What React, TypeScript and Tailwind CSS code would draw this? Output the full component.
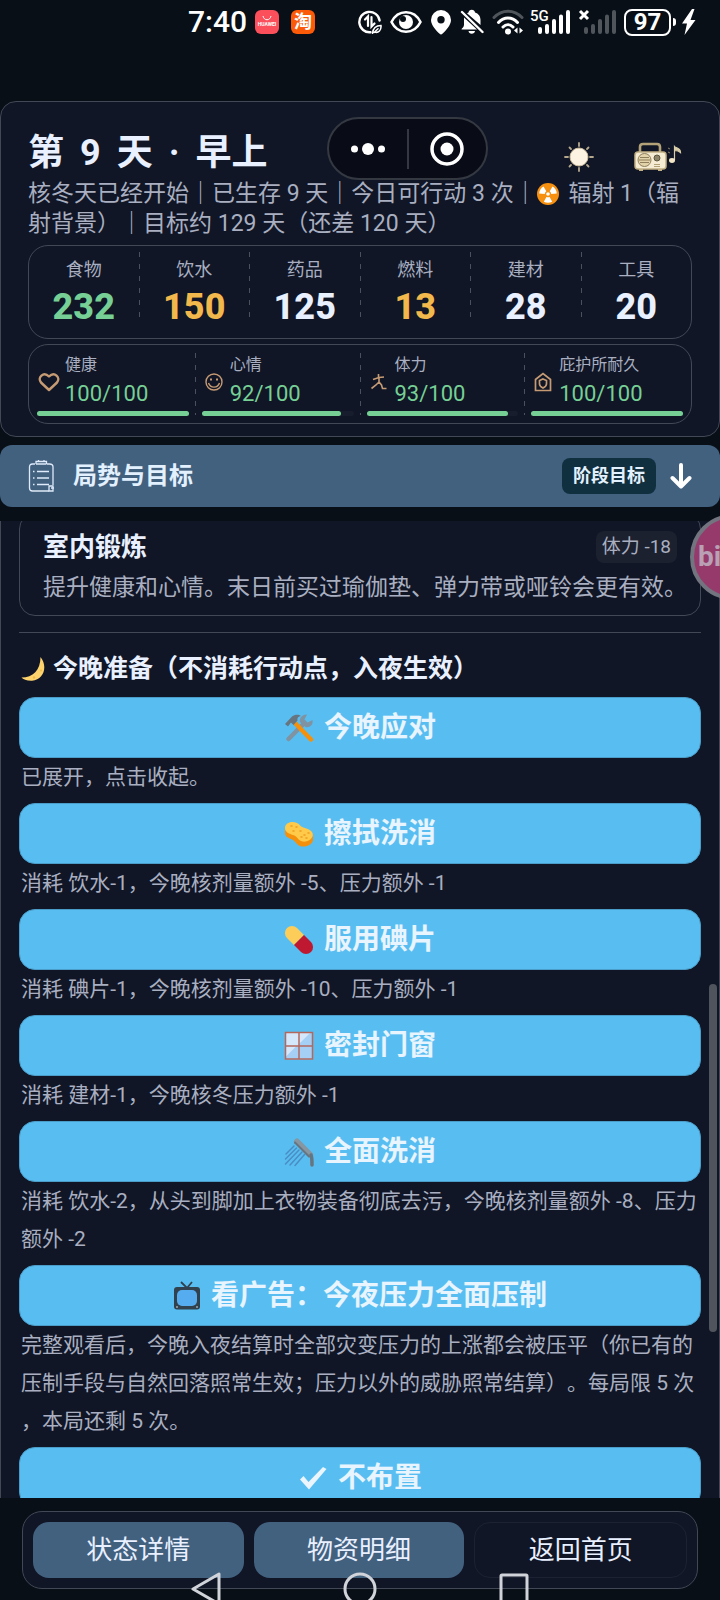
import React from 'react';
import clsx from 'clsx';

interface Resource {
  label: string;
  value: number;
  color: string;
}

interface Stat {
  label: string;
  value: number;
  icon: React.ReactNode;
}

interface NightAction {
  label: string;
  icon: React.ReactNode;
  lines: string[];
}

/* ---------- status bar icons ---------- */

const DataSaverIcon = () => (
  <svg width="24" height="24" viewBox="0 0 24 24" fill="none" stroke="white" strokeWidth="2.4" strokeLinecap="round">
    <path d="M21.6 10.5A10.2 10.2 0 1 0 12.5 22.2" />
    <path d="M7 9.5 10 6.5V16M13.5 7V16.5L16.5 13.5" strokeWidth="2.2" />
    <path d="M14.5 23.5C15 18 18 15.5 23 15.5 23.5 20 20.5 23.5 16.5 22M16 22.5 20 18.8" strokeWidth="1.5" />
  </svg>
);

const EyeIcon = () => (
  <svg width="32" height="24" viewBox="0 0 32 24">
    <path d="M1.5 12C8-1 24-1 30.500 12 24 25 8 25 1.500 12Z" fill="none" stroke="white" strokeWidth="2.6" strokeLinejoin="round" />
    <circle cx="16" cy="12" r="7" fill="white" />
    <circle cx="13" cy="9" r="3" fill="#080f16" />
  </svg>
);

const PinIcon = () => (
  <svg width="22" height="26" viewBox="0 0 22 26">
    <path d="M11 1a10 10 0 0 0-10 10c0 5 5 10.500 8.600 13.700a2 2 0 0 0 2.800 0C16 21.500 21 16 21 11A10 10 0 0 0 11 1Zm0 13.500a3.700 3.700 0 1 1 0-7.400 3.700 3.700 0 0 1 0 7.400Z" fill="white" fillRule="evenodd" />
  </svg>
);

const BellOffIcon = () => (
  <svg width="24" height="26" viewBox="0 0 24 26">
    <path d="M8.500 3.500a3.300 3.300 0 0 1 6.500 0c3.500 1 5.500 4 5.500 7.500v5L7 4.200ZM4 8.500 17 20.500H1.500c0-1.500 2.500-2 2.500-4.500ZM8.500 22h6.500a3.300 3.300 0 0 1-6.500 0Z" fill="white" />
    <path d="M2 3 22.500 23" stroke="white" strokeWidth="2.400" strokeLinecap="round" />
  </svg>
);

const WifiIcon = () => (
  <svg width="32" height="26" viewBox="0 0 32 26" fill="none" strokeLinecap="round" strokeWidth="3">
    <path d="M2 8.500C10 0 22 0 30 8.500" stroke="#50555c" />
    <path d="M6.500 13.500C12 7.500 20 7.500 25.500 13.500M11 18C14 15 18 15 21 18" stroke="white" />
    <circle cx="16" cy="22.500" r="3" fill="white" />
    <path d="M25.500 18.500v6l-3.500-3ZM27.500 18.500v6l3.500-3Z" fill="white" />
  </svg>
);

const SignalBars = ({ color }: { color: string }) => (
  <svg width="38" height="26" viewBox="0 0 38 26" stroke={color} strokeWidth="4" strokeLinecap="round">
    <path d="M8 20v3M15 17v6M22 12v11M29 7.500V23M36 3V23" />
  </svg>
);

const BoltIcon = () => (
  <svg width="15" height="28" viewBox="0 0 15 28">
    <path d="M11 1 1 15.500h5L3.500 27 14.500 12H9.500L13.500 1Z" fill="white" />
  </svg>
);

const StatusBar: React.FC = () => (
  <div className="flex h-11 shrink-0 items-center justify-end pr-6">
    <span className="text-[30px] leading-none font-medium text-white">7:40</span>
    <span className="ml-2 flex size-6 flex-col items-center justify-center rounded-md bg-[#fb4f5c]">
      <svg width="10" height="5" viewBox="0 0 10 5" fill="none" stroke="white">
        <path d="M1 0c1 5 7 5 8 0" />
      </svg>
      <span className="text-[5px] leading-[7px] font-bold text-white">HUAWEI</span>
    </span>
    <span className="ml-3 flex size-6 items-center justify-center rounded-md bg-[#fb5a08] text-[18px] leading-none font-bold text-white">淘</span>
    <div className="ml-[43px] flex items-center gap-2">
      <DataSaverIcon />
      <EyeIcon />
      <PinIcon />
      <BellOffIcon />
      <WifiIcon />
      <span className="relative">
        <SignalBars color="white" />
        <span className="absolute top-0 -left-0.5 text-[15px] leading-none font-medium text-white">5G</span>
      </span>
      <span className="relative">
        <SignalBars color="#50555c" />
        <svg className="absolute top-0 left-0" width="12" height="12" viewBox="0 0 12 12">
          <path d="M2 2 10 10M10 2 2 10" stroke="white" strokeWidth="3" />
        </svg>
      </span>
      <span className="flex items-center gap-px">
        <span className="flex h-[27px] w-[47px] items-center justify-center rounded-lg border-2 border-white text-[24px] leading-none font-bold text-white">97</span>
        <span className="ml-px h-2 w-[3px] rounded-r-sm bg-white" />
        <span className="ml-1"><BoltIcon /></span>
      </span>
    </div>
  </div>
);

/* ---------- header icons ---------- */

const SunIcon = () => (
  <svg width="30" height="30" viewBox="0 0 30 30">
    <circle cx="15" cy="15" r="9" fill="#fdf3e3" stroke="#cdbd9c" />
    <path d="M15 1v3M15 26V29M1 15h3M26 15H29M5.500 5.500l1.500 1.500M23 23l1.500 1.500M5.500 24.500l1.500-1.500M23 7l1.500-1.500" stroke="#b5a88d" strokeWidth="1.800" strokeLinecap="round" />
  </svg>
);

const RadioIcon = () => (
  <svg width="48" height="30" viewBox="0 0 48 30">
    <path d="M6 11V5q0-3 3-3h14q3 0 3 3v6" fill="none" stroke="#b3a277" strokeWidth="2.600" />
    <rect x="1" y="10" width="31" height="17" rx="3" fill="#f6ecd4" stroke="#c2b084" strokeWidth="1.500" />
    <path d="M5 28h4M24 28h4" stroke="#c2b084" strokeWidth="2" />
    <circle cx="10.500" cy="18" r="6.500" fill="#e2d3ab" stroke="#8f7f5a" />
    <path d="M6 15.500h9M5 18h11M6 20.500h9" stroke="#8f7f5a" />
    <circle cx="23" cy="16" r="3" fill="#8e8467" stroke="#5d563f" />
    <path d="M20 22.500h6M20 24.500h6" stroke="#b3a277" />
    <path d="M40.500 18V4.500c1.500 2 6 1 6 6-2-2-4-2-6-2" fill="#d9cda8" stroke="#d9cda8" strokeWidth="1.200" />
    <ellipse cx="38" cy="18.500" rx="3" ry="2.400" fill="#f1e5c6" />
    <path d="M34 6l2 1M34 10l2 1" stroke="#8b8269" />
  </svg>
);

const RadiationIcon = () => (
  <svg className="mr-1 inline-block align-[-4px]" width="22" height="22" viewBox="0 0 22 22">
    <circle cx="11" cy="11" r="11" fill="#f59011" />
    <circle cx="11" cy="11" r="1.800" fill="white" />
    <path d="M9.300 8.300 6.500 3.500A8.800 8.800 0 0 0 2.200 10.500L7.800 11a3.300 3.300 0 0 1 1.500-2.700ZM12.700 8.300l2.800-4.800a8.800 8.800 0 0 1 4.300 7L14.200 11a3.300 3.300 0 0 0-1.500-2.700ZM9.400 13.900 6.800 18.700a8.800 8.800 0 0 0 8.400 0L12.600 13.900a3.300 3.300 0 0 1-3.200 0Z" fill="white" />
  </svg>
);

const HeartIcon = () => (
  <svg width="22" height="20" viewBox="0 0 22 20" fill="none" stroke="#c69b74" strokeWidth="2.400">
    <path d="M11 18 3 10.500C-1 5.500 5.500-1 11 4.500 16.500-1 23 5.500 19 10.500Z" strokeLinejoin="round" />
  </svg>
);

const SmileIcon = () => (
  <svg width="18" height="18" viewBox="0 0 18 18" fill="none" stroke="#c69b74" strokeWidth="1.400">
    <circle cx="9" cy="9" r="8" />
    <path d="M3.500 10c2 5.500 9 5.500 11 0" />
    <path d="M5 6.500h2M11 6.500h2" strokeWidth="2" />
  </svg>
);

const RunnerIcon = () => (
  <svg width="16" height="16" viewBox="0 0 16 16" fill="none" stroke="#c69b74" strokeWidth="1.600">
    <path d="M7.500 0v3M2 5.500 8 3.500l5-.5M8 3.500 8 8 5 11 .5 14.500M8 8l2.500 3 1 3.500h4" />
  </svg>
);

const ShelterIcon = () => (
  <svg width="18" height="20" viewBox="0 0 18 20" fill="none" stroke="#c69b74" strokeWidth="1.700">
    <path d="M1.500 18.500V7.500L9 1.500l7.500 6v11Z" />
    <path d="M9 7 12.500 8.500v3.500c0 1.500-1.500 3-3.500 4-2-1-3.500-2.500-3.500-4V8.500Z" />
  </svg>
);

const ClipboardIcon = () => (
  <svg width="27" height="34" viewBox="0 0 27 34" fill="none" stroke="#dfeafa" strokeWidth="1.300">
    <path d="M7 5H4.500Q1.500 5 1.500 8v21q0 3 3 3H21M19 5h2.500Q25 5 25 8v18" />
    <path d="M8 5V2.500h2.500V1M18.500 5V2.500H16V1M10.500 2.500H16M8 5h10.500" />
    <path d="M5 12.500h1.500M5 19h1.500M5 25.500h1.500M9 12.500h12M9 19h12M9 25.500h12" />
    <path d="M21 27h4v5h-4zM23 29h3" />
  </svg>
);

const ArrowDownIcon = () => (
  <svg width="22" height="28" viewBox="0 0 22 28" fill="none" stroke="white" strokeWidth="4" strokeLinecap="round" strokeLinejoin="round">
    <path d="M11 3v21M2.500 16 11 24.500 19.500 16" />
  </svg>
);

/* ---------- night action icons ---------- */

const MoonIcon = () => (
  <svg width="24" height="24" viewBox="0 0 24 24">
    <path d="M19.500 0C27 9 23 23 11 23.800 6 24 2 22.500 .5 20.500 12 20.500 19.500 13 19.500 0Z" fill="#fdd36d" />
    <circle cx="13" cy="20.500" r="1.200" fill="#f0b94b" />
    <circle cx="20" cy="13.500" r="1" fill="#f0b94b" />
  </svg>
);

const ToolsIcon = () => (
  <svg width="30" height="30" viewBox="0 0 30 30">
    <path d="M4.500 26 20.500 10" stroke="#7f93a3" strokeWidth="4.500" strokeLinecap="round" />
    <path d="M23 1.500 20.500 6.500 23.500 9.500 28.500 7c1 5-3 8-7 7L16 9c-1-4 2.500-8 7-7.500Z" fill="#7f93a3" />
    <path d="M11 10 27 26.500" stroke="#f4900c" strokeWidth="4.500" strokeLinecap="round" />
    <path d="M1 11 8 3.500c3-2.500 7-2 9-.5-3 .5-4 2-3.500 4.500L9.500 12 7 9.500 4 13.500Z" fill="#66757f" />
  </svg>
);

const SpongeIcon = () => (
  <svg width="30" height="30" viewBox="0 0 30 30">
    <path d="M1 9v5c0 4 4 5 7 6.500 4 2 5 6.500 10 7 6 .5 11-3 11-7v-5Z" fill="#f4900c" />
    <path d="M1 9C1 3.500 8 1.500 13 4c4 2 3 4 8 5 6 1.500 9 5 7.500 8.500C27 21.500 21 24 17 22c-4-2-3.500-4.500-8-6C4.500 14.500 1 13 1 9Z" fill="#ffc94a" />
    <path d="M7 7h1M12 8h1M9 12h1M16 12h1M20 16h1M24 14h1M17 18h1M22 19h1" stroke="#ee9d20" strokeWidth="1.500" strokeLinecap="round" />
  </svg>
);

const PillIcon = () => (
  <svg width="30" height="30" viewBox="0 0 30 30">
    <path d="M10 20 3 13A7 7 0 0 1 13 3L20 10Z" fill="#fcce59" />
    <path d="M20 10 27 17A7 7 0 0 1 17 27L10 20Z" fill="#be1931" />
  </svg>
);

const WindowIcon = () => (
  <svg width="30" height="30" viewBox="0 0 30 30">
    <rect x="1.500" y="1.500" width="27" height="27" fill="#a5cff5" />
    <path d="M1.500 1.500h13.500v13.500H1.500ZM15 15V13L26.500 1.500H15ZM1.500 28.500V26L12.500 15H1.500Z" fill="#d5e7fa" />
    <path d="M1.500 1.500h27v26.500h-27ZM15 1.500v27M1.500 15h27" fill="none" stroke="#b4685c" strokeWidth="1.500" />
  </svg>
);

const ShowerIcon = () => (
  <svg width="30" height="30" viewBox="0 0 30 30" fill="none" strokeLinecap="round">
    <path d="M10 9 2 17M12.500 11 1.500 22M15 13 1.500 27M18 15 6 28M20.500 17.500 11 28.500" stroke="#4a8dc4" strokeWidth="1.500" />
    <path d="M13 4.500 26 17.500" stroke="#8796a0" strokeWidth="6" />
    <path d="M11 5.500 25 19.500" stroke="#66757f" strokeWidth="2" />
    <path d="M27 18c1 2 1 6 1 10" stroke="#66757f" strokeWidth="3.500" />
  </svg>
);

const TvIcon = () => (
  <svg width="28" height="30" viewBox="0 0 28 30">
    <path d="M8 1l6 6 5-6" fill="none" stroke="#31414d" strokeWidth="1.800" />
    <rect x="1" y="6" width="26" height="22.500" rx="3" fill="#31414d" />
    <rect x="4" y="9" width="20" height="16" rx="5" fill="#55acee" />
    <circle cx="4" cy="26" r="1" fill="#9aaab4" />
    <circle cx="24" cy="26" r="1" fill="#9aaab4" />
  </svg>
);

const CheckIcon = () => (
  <svg width="30" height="28" viewBox="0 0 30 28">
    <path d="M2 15.500 5.500 12l5 6L25 3l3.500 2L11 25.500Z" fill="#eaf5fe" />
  </svg>
);

/* ---------- data ---------- */

const resources: Resource[] = [
  { label: '食物', value: 232, color: 'text-[#76d095]' },
  { label: '饮水', value: 150, color: 'text-[#f2b84b]' },
  { label: '药品', value: 125, color: 'text-[#e9f0ff]' },
  { label: '燃料', value: 13, color: 'text-[#f2b84b]' },
  { label: '建材', value: 28, color: 'text-[#e9f0ff]' },
  { label: '工具', value: 20, color: 'text-[#e9f0ff]' },
];

const stats: Stat[] = [
  { label: '健康', value: 100, icon: <HeartIcon /> },
  { label: '心情', value: 92, icon: <SmileIcon /> },
  { label: '体力', value: 93, icon: <RunnerIcon /> },
  { label: '庇护所耐久', value: 100, icon: <ShelterIcon /> },
];

const nightActions: NightAction[] = [
  { label: '今晚应对', icon: <ToolsIcon />, lines: ['已展开，点击收起。'] },
  { label: '擦拭洗消', icon: <SpongeIcon />, lines: ['消耗 饮水-1，今晚核剂量额外 -5、压力额外 -1'] },
  { label: '服用碘片', icon: <PillIcon />, lines: ['消耗 碘片-1，今晚核剂量额外 -10、压力额外 -1'] },
  { label: '密封门窗', icon: <WindowIcon />, lines: ['消耗 建材-1，今晚核冬压力额外 -1'] },
  {
    label: '全面洗消',
    icon: <ShowerIcon />,
    lines: ['消耗 饮水-2，从头到脚加上衣物装备彻底去污，今晚核剂量额外 -8、压力', '额外 -2'],
  },
  {
    label: '看广告：今夜压力全面压制',
    icon: <TvIcon />,
    lines: [
      '完整观看后，今晚入夜结算时全部灾变压力的上涨都会被压平（你已有的',
      '压制手段与自然回落照常生效；压力以外的威胁照常结算）。每局限 5 次',
      '，本局还剩 5 次。',
    ],
  },
  { label: '不布置', icon: <CheckIcon />, lines: [] },
];

/* ---------- sections ---------- */

const DashedLine = ({ className }: { className?: string }) => (
  <span
    className={clsx(
      'w-px shrink-0 bg-[repeating-linear-gradient(to_bottom,#4b505e_0px,#4b505e_5px,transparent_5px,transparent_12px)]',
      className
    )}
  />
);

const Capsule: React.FC = () => (
  <div className="absolute top-[117px] left-1/2 ml-[-33px] flex h-[63px] w-[161px] items-center rounded-full border-2 border-[#343841] bg-[#090c17]">
    <button aria-label="更多" className="flex flex-1 items-center justify-center">
      <svg width="36" height="14" viewBox="0 0 36 14" fill="white">
        <circle cx="4.500" cy="7" r="3.500" />
        <circle cx="18" cy="7" r="6" />
        <circle cx="31.500" cy="7" r="3.500" />
      </svg>
    </button>
    <span className="h-10 w-0.5 bg-[#343841]" />
    <button aria-label="关闭" className="flex flex-1 items-center justify-center">
      <svg width="34" height="34" viewBox="0 0 34 34">
        <circle cx="17" cy="17" r="15" fill="none" stroke="white" strokeWidth="3.500" />
        <circle cx="17" cy="17" r="6.500" fill="white" />
      </svg>
    </button>
  </div>
);

const Header: React.FC = () => (
  <header className="mt-[57px] shrink-0 rounded-2xl border border-[#434856] bg-[#101626] px-[27px] pt-[27px] pb-3">
    <div className="flex h-[50px] items-center justify-between">
      <h1 className="flex gap-4 pb-0.5 text-[36px] leading-[44px] font-bold text-[#e9f0ff]">
        <span>第</span>
        <span>9</span>
        <span>天</span>
        <span>·</span>
        <span>早上</span>
      </h1>
      <div className="flex items-center gap-10 pt-1.5 pr-2.5">
        <button aria-label="天气"><SunIcon /></button>
        <button aria-label="收音机"><RadioIcon /></button>
      </div>
    </div>
    <p className="text-[23px] leading-[30px] whitespace-nowrap text-[#a9afc0]">
      核冬天已经开始｜已生存 9 天｜今日可行动 3 次｜<RadiationIcon /> 辐射 1（辐
      <br />
      射背景）｜目标约 129 天（还差 120 天）
    </p>

    <div className="mt-1.5 flex h-[94px] rounded-[20px] border border-[#434856] pt-1.5">
      {resources.map((r, i) => (
        <React.Fragment key={r.label}>
          {i > 0 && <DashedLine className="h-[66px]" />}
          <div className="flex flex-1 flex-col items-center pt-1">
            <span className="text-[18px] leading-7 text-[#a9afc0]">{r.label}</span>
            <span className={clsx('text-[36px] leading-[46px] font-extrabold', r.color)}>{r.value}</span>
          </div>
        </React.Fragment>
      ))}
    </div>

    <div className="mt-[5px] flex h-20 rounded-[20px] border border-[#434856] px-0.5 pt-2">
      {stats.map((s, i) => (
        <React.Fragment key={s.label}>
          {i > 0 && <DashedLine className="h-[62px]" />}
          <div className="flex flex-1 flex-col px-1.5">
            <div className="flex items-center gap-1">
              <span className="flex w-6 shrink-0 justify-center">{s.icon}</span>
              <div className="flex flex-col whitespace-nowrap">
                <span className="text-[16px] leading-6 text-[#a9afc0]">{s.label}</span>
                <span className="text-[22px] leading-[34px] text-[#76d095]">{s.value}/100</span>
              </div>
            </div>
            <div className="h-[5px] rounded-full bg-[#171d2c]">
              <div className="h-full rounded-full bg-[#76d095]" style={{ width: `${s.value}%` }} />
            </div>
          </div>
        </React.Fragment>
      ))}
    </div>
  </header>
);

const GoalBar: React.FC = () => (
  <button className="mt-2 flex h-[62px] w-full shrink-0 items-center rounded-xl bg-[#42617f] pr-7 pl-7">
    <ClipboardIcon />
    <span className="ml-[18px] text-[24px] font-bold text-[#e3f1ff]">局势与目标</span>
    <span className="ml-auto rounded-lg bg-[#10303f] px-[11px] text-[18px] leading-9 font-bold text-[#e3f1ff]">阶段目标</span>
    <span className="ml-3.5"><ArrowDownIcon /></span>
  </button>
);

const NightPlan: React.FC = () => (
  <section>
    <h2 className="mt-[18px] mb-2.5 flex items-center gap-2 pl-0.5 text-[25px] leading-9 font-bold text-[#e9f0ff]">
      <MoonIcon />
      今晚准备（不消耗行动点，入夜生效）
    </h2>
    {nightActions.map((action) => (
      <div key={action.label} className="mb-[7px]">
        <button className="flex h-[61px] w-full items-center justify-center gap-2.5 rounded-2xl border border-[#4a9dc9] bg-[#58bef1] text-[28px] font-bold text-[#e8f4fe]">
          {action.icon}
          {action.label}
        </button>
        <p className="pl-0.5 text-[21px] leading-[38px] whitespace-nowrap text-[#a9afc0]">
          {action.lines.map((line) => (
            <span key={line} className="block">{line}</span>
          ))}
        </p>
      </div>
    ))}
  </section>
);

const FloatingBall: React.FC = () => (
  <button
    aria-label="bilibili"
    className="absolute top-[514px] -right-14 flex size-[86px] items-center rounded-full border-4 border-[#72747f] bg-[#963a6c] pl-1 text-[28px] font-bold text-[#b9a0b4]"
  >
    bi
  </button>
);

const SystemNav: React.FC = () => (
  <div className="absolute inset-x-0 bottom-0 flex h-7 items-start justify-center gap-[122px] overflow-hidden">
    <svg width="30" height="34" viewBox="0 0 30 34" className="shrink-0" fill="none" stroke="#d0d3d9" strokeWidth="3" strokeLinejoin="round">
      <path d="M28 2V32L2 17Z" />
    </svg>
    <svg width="34" height="34" viewBox="0 0 34 34" className="shrink-0" fill="none" stroke="#d0d3d9" strokeWidth="3">
      <circle cx="17" cy="17" r="15" />
    </svg>
    <svg width="30" height="34" viewBox="0 0 30 34" className="shrink-0" fill="none" stroke="#d0d3d9" strokeWidth="3">
      <rect x="2" y="3" width="26" height="28" rx="1" />
    </svg>
  </div>
);

const BottomBar: React.FC = () => (
  <footer className="shrink-0 px-[22px] pt-[13px] pb-[11px]">
    <nav className="flex h-[78px] gap-2.5 rounded-[20px] border border-[#434856] bg-[#101626] p-2.5">
      <button className="flex-1 rounded-2xl bg-[#42617f] text-[26px] text-[#e9f0ff]">状态详情</button>
      <button className="flex-1 rounded-2xl bg-[#42617f] text-[26px] text-[#e9f0ff]">物资明细</button>
      <button className="flex-1 rounded-2xl border border-[#1c2232] text-[26px] text-[#e9f0ff]">返回首页</button>
    </nav>
  </footer>
);

const App: React.FC = () => {
  return (
    <div className="relative flex h-screen flex-col overflow-hidden bg-[#080f16] font-[Roboto,'Noto_Sans_CJK_SC',sans-serif] [text-spacing-trim:space-all]">
      <StatusBar />
      <Header />
      <GoalBar />

      <main className="relative mt-3.5 min-h-0 flex-1 overflow-hidden border-x border-[#434856] bg-[#101626] px-[18px]">
        <article className="-mt-2 rounded-2xl border border-[#434856] px-[23px] pt-[15px] pb-2.5">
          <div className="flex items-center justify-between">
            <h2 className="text-[26px] leading-9 font-bold text-[#e9f0ff]">室内锻炼</h2>
            <span className="rounded-lg bg-[#1c2130] px-1.5 text-[19px] leading-8 text-[#a9afc0]">体力 -18</span>
          </div>
          <p className="mt-1.5 text-[23px] leading-[34px] whitespace-nowrap text-[#a9afc0]">
            提升健康和心情。末日前买过瑜伽垫、弹力带或哑铃会更有效。
          </p>
        </article>
        <hr className="mt-4 border-[#434856]" />
        <NightPlan />
        <span className="absolute top-[463px] right-0.5 h-[348px] w-2 rounded-full bg-[#50545d]" />
      </main>

      <BottomBar />
      <Capsule />
      <FloatingBall />
      <SystemNav />
    </div>
  );
};

export default App;
